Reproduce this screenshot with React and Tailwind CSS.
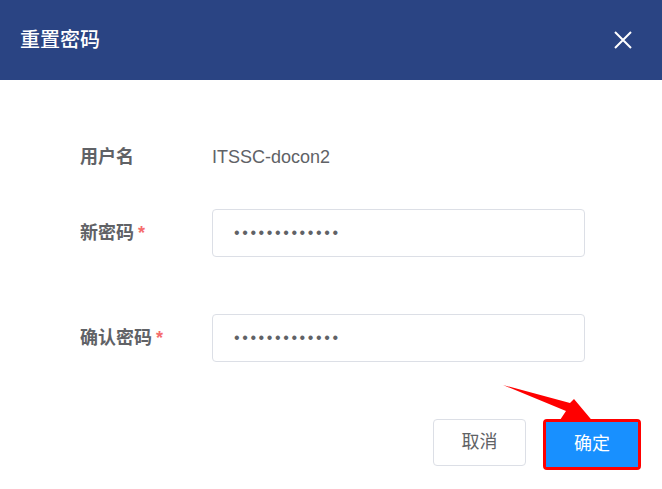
const font = { fontFamily: '"Liberation Sans", "Noto Sans CJK SC", sans-serif' };

const Label = ({ children, required }) => (
  <div className="w-[132px] shrink-0 text-[18px] font-bold text-[#606266]">
    {children}
    {required && <span className="ml-1 text-[#f56c6c]">*</span>}
  </div>
);

const PasswordInput = () => (
  <input
    type="password"
    readOnly
    defaultValue="1234567890abc"
    className="h-12 w-[373px] rounded border border-[#dcdfe6] bg-white px-[21px] text-[16px] tracking-[2.6px] text-[#606266] outline-none"
    style={font}
  />
);

export default function App() {
  return (
    <div className="relative h-[489px] w-[662px] overflow-hidden bg-white" style={font}>
      {/* 头部 */}
      <div className="flex h-20 items-center justify-between bg-[#2a4483] pl-5 pr-[30px]">
        <h2 className="text-[20px] font-medium text-white">重置密码</h2>
        <button type="button" className="text-white">
          <svg width="18" height="18" viewBox="0 0 18 18" stroke="currentColor" strokeWidth="2">
            <path d="M1 1L17 17M17 1L1 17" />
          </svg>
        </button>
      </div>

      <div className="pl-20 pt-[53px]">
        <div className="flex h-12 items-center">
          <Label>用户名</Label>
          <span className="text-[18px] text-[#606266]">ITSSC-docon2</span>
        </div>
        <div className="mt-7 flex h-12 items-center">
          <Label required>新密码</Label>
          <PasswordInput />
        </div>
        <div className="mt-[57px] flex h-12 items-center">
          <Label required>确认密码</Label>
          <PasswordInput />
        </div>
      </div>

      <div className="relative z-10 mt-[57px] flex justify-end gap-[17px] pr-[21px]">
        <button
          type="button"
          className="h-[47px] w-[93px] rounded border border-[#dcdfe6] bg-white text-[18px] text-[#606266]"
        >
          取消
        </button>
        <div className="rounded-sm border-[3px] border-[#ff0000]">
          <button type="button" className="h-[45px] w-[92px] bg-[#1890ff] text-[18px] text-white">
            确定
          </button>
        </div>
      </div>

      {/* 标注箭头 */}
      <svg className="absolute left-0 top-0 z-0" width="662" height="489">
        <polygon points="503,385 570,403 574,399 595,424 560,420 566,411" fill="#ff0000" />
      </svg>
    </div>
  );
}
